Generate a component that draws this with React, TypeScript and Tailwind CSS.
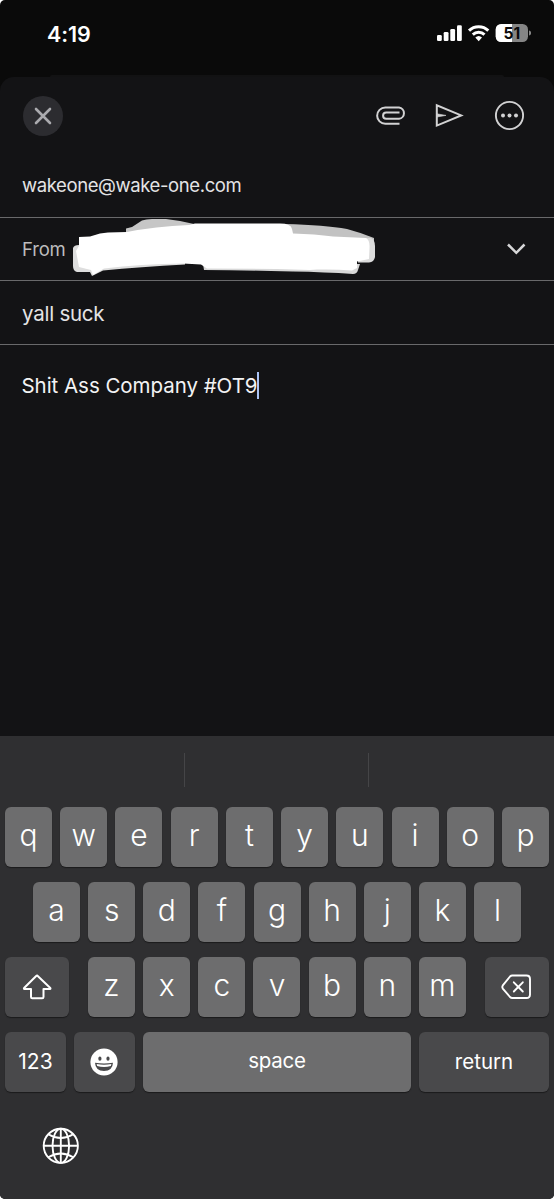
import type { ReactNode } from "react";

const topRow = ["q", "w", "e", "r", "t", "y", "u", "i", "o", "p"];
const middleRow = ["a", "s", "d", "f", "g", "h", "j", "k", "l"];
const bottomRow = ["z", "x", "c", "v", "b", "n", "m"];

const LetterKey = ({ letter }: { letter: string }) => (
  <button className="w-[47px] h-[60px] shrink-0 rounded-[6px] bg-[#6d6d6e] pb-[5px] text-[30px] leading-none font-[330] text-white shadow-[0_1px_1px_#1b1b1c] flex items-center justify-center">
    {letter}
  </button>
);

const DarkKey = ({
  className,
  label,
  children,
}: {
  className: string;
  label: string;
  children: ReactNode;
}) => (
  <button
    aria-label={label}
    className={`h-[60px] shrink-0 rounded-[6px] bg-[#49494b] text-white shadow-[0_1px_1px_#1b1b1c] flex items-center justify-center ${className}`}
  >
    {children}
  </button>
);

const StatusBar = () => (
  <div className="h-[75px] shrink-0 pl-[47px] pr-[23px] pt-[23px] flex items-start justify-between">
    <span className="pt-px text-[21.5px] leading-5 tracking-[-0.1px] font-semibold text-white">4:19</span>
    <svg width="95" height="20" viewBox="436 23 95 20" fill="none">
      <g fill="#fff">
        <rect x="437" y="35" width="4.8" height="6" rx="1.3" />
        <rect x="443.7" y="32" width="4.8" height="9" rx="1.3" />
        <rect x="450.3" y="29" width="4.8" height="12" rx="1.3" />
        <rect x="457" y="25.2" width="4.8" height="15.8" rx="1.3" />
      </g>
      <g stroke="#fff" strokeWidth="3">
        <path d="M469 30.7A14 14 0 0 1 488.3 30.7" />
        <path d="M472.8 34.6A8.6 8.6 0 0 1 484.5 34.6" />
      </g>
      <path d="M475.3 37.6Q478.7 34.6 482 37.6L478.7 41.2Z" fill="#fff" />
      <rect x="495.7" y="24" width="32.3" height="18" rx="5.5" fill="#858585" />
      <path d="M512 24H501.2A5.5 5.5 0 0 0 495.7 29.5V36.5A5.5 5.5 0 0 0 501.2 42H512Z" fill="#fff" />
      <path d="M529 30.5Q531.2 31 531.2 33T529 35.5Z" fill="#858585" />
      <text x="511.8" y="38.6" textAnchor="middle" fontSize="15.5" fontWeight="700" fill="#0a0a0a">
        51
      </text>
    </svg>
  </div>
);

const Toolbar = () => (
  <div className="h-[77px] shrink-0 pl-[23px] pr-[29px] flex items-center justify-between">
    <button
      aria-label="Close"
      className="w-10 h-10 rounded-full bg-[#2c2c30] flex items-center justify-center"
    >
      <svg width="18" height="18" viewBox="0 0 18 18" stroke="#aaaaae" strokeWidth="2.6" strokeLinecap="round">
        <path d="M2 2L16 16M16 2L2 16" />
      </svg>
    </button>
    <div className="flex items-center text-[#d2d2d3]">
      <svg width="30" height="20" viewBox="375 105.5 30 20" fill="none" stroke="currentColor" strokeWidth="2">
        <path d="M399.5 123.3H385.3A8.1 8.1 0 0 1 385.3 107H399A5.7 5.7 0 0 1 399 118.3H386.2A3.1 3.1 0 0 1 386.2 112.1H399.5" />
      </svg>
      <svg className="ml-[30px]" width="29" height="26" viewBox="435.5 103 29 26" fill="none" stroke="currentColor" strokeWidth="2">
        <path d="M437.3 105.3V125.6L461.7 115.4Z" />
        <path d="M437.3 113.8L446.5 115.4L437.3 117Z" fill="currentColor" strokeWidth="0.6" />
      </svg>
      <svg className="ml-[30px]" width="31" height="31" viewBox="0 0 31 31" fill="none">
        <circle cx="15.5" cy="15.5" r="13.6" stroke="currentColor" strokeWidth="1.9" />
        <g fill="currentColor">
          <circle cx="9" cy="15.5" r="2" />
          <circle cx="15.5" cy="15.5" r="2" />
          <circle cx="22" cy="15.5" r="2" />
        </g>
      </svg>
    </div>
  </div>
);

// White brush strokes over the sender address
const Scribble = () => (
  <svg className="ml-[5px] shrink-0" width="309" height="62" viewBox="70 218 309 62">
    <defs>
      <filter id="soft" x="-5%" y="-10%" width="110%" height="120%">
        <feGaussianBlur stdDeviation="0.7" />
      </filter>
    </defs>
    <g filter="url(#soft)">
      <path d="M126 233V228.5L132 227L142 220.5Q146 219 152 219H166Q180 220.5 194 224V234Z" fill="#c6c6c6" />
      <path d="M285 224Q325 225 347 229Q362 233 374 238V244H285Z" fill="#c2c2c2" />
      <path d="M73 248Q74 245 79 245L86 264L130 262L185 260V264.5Q140 267 103 270.5L92 276L90 272H77Q73 271 73 266Z" fill="#dedede" />
      <path d="M203 264H360L358 270Q357 274 353 274Q325 272 293 271.5Q240 270 204 270Z" fill="#d8d8d8" />
      <path d="M360 238H371Q375 240 375 246V257Q374 262 369 262.5H358Z" fill="#dcdcdc" />
      <path
        d="M79 237L90 236.5L100 233.5L108 232.5L127 232Q155 226.5 189 225L195 223.5H280Q291 223.5 292 229L293 233.5Q315 234 333 236.5L366 238Q370 240 369.5 248L369 259L357 261.5V268L352 270.5Q335 269 317 269.5L310 270L277 269L207 268.5L201 264.5L183 263.5Q140 264 104 268.5L93 275L91 270L79 267L76 251L79 246Z"
        fill="#fff"
      />
    </g>
  </svg>
);

const Keyboard = () => (
  <div className="h-[463px] shrink-0 bg-[#2f2f31] flex flex-col">
    <div className="h-[71px] shrink-0 flex items-center">
      <div className="w-[184.5px] h-[34px] mt-[-3px] border-r border-[#454547]" />
      <div className="w-[184.5px] h-[34px] mt-[-3px] border-r border-[#454547]" />
    </div>
    <div className="px-[5px] flex flex-col gap-[15px]">
      <div className="flex justify-between">
        {topRow.map((letter) => (
          <LetterKey key={letter} letter={letter} />
        ))}
      </div>
      <div className="px-[28px] flex justify-between">
        {middleRow.map((letter) => (
          <LetterKey key={letter} letter={letter} />
        ))}
      </div>
      <div className="flex justify-between">
        <DarkKey className="w-16" label="Shift">
          <svg width="30" height="26" viewBox="0 0 30 26" fill="none" stroke="currentColor" strokeWidth="2" strokeLinejoin="round">
            <path d="M15.2 1.5L28.3 14Q28.8 14.9 28 14.9H21.5V23Q21.5 24.3 20.2 24.3H10.3Q9 24.3 9 23V14.9H2.4Q1.6 14.9 2.1 14L14.2 2Q15 1 15.8 2" />
          </svg>
        </DarkKey>
        <div className="w-[378px] flex justify-between">
          {bottomRow.map((letter) => (
            <LetterKey key={letter} letter={letter} />
          ))}
        </div>
        <DarkKey className="w-16" label="Delete">
          <svg className="mr-[3px]" width="30" height="26" viewBox="0 0 30 26" fill="none" stroke="currentColor" strokeWidth="1.9" strokeLinecap="round" strokeLinejoin="round">
            <path d="M11.2 1.5H25.5Q29 1.5 29 5V20.5Q29 24 25.5 24H11.2Q10 24 9 23L1.8 14.6Q.8 13 1.8 11.4L9 2.5Q10 1.5 11.2 1.5Z" />
            <path d="M12.8 8.3L21.8 17.5M21.8 8.3L12.8 17.5" />
          </svg>
        </DarkKey>
      </div>
      <div className="flex justify-between text-[21px]">
        <DarkKey className="w-[61px]" label="Numbers">
          123
        </DarkKey>
        <DarkKey className="w-[61px]" label="Emoji">
          <svg className="mr-px" width="28" height="28" viewBox="0 0 28 28">
            <circle cx="14" cy="14" r="13.6" fill="#fff" />
            <ellipse cx="9.9" cy="10.7" rx="1.6" ry="2.1" fill="#49494b" />
            <ellipse cx="18" cy="10.7" rx="1.6" ry="2.1" fill="#49494b" />
            <path d="M5 14.8Q14 16.2 23 14.8Q22.6 23 14 23Q5.4 23 5 14.8Z" fill="#49494b" />
            <path d="M6.6 16.1Q14 17.3 21.4 16.1L20.8 18Q14 20 7.2 18Z" fill="#fff" />
          </svg>
        </DarkKey>
        <button className="w-[268px] h-[60px] rounded-[6px] bg-[#6d6d6e] pb-[2px] text-[20.5px] tracking-[-0.2px] text-white shadow-[0_1px_1px_#1b1b1c]">
          space
        </button>
        <DarkKey className="w-[130px] text-[20.5px]" label="Return">
          return
        </DarkKey>
      </div>
    </div>
    <div className="flex-1 pl-[42px] pt-[35px]">
      <svg width="38" height="38" viewBox="0 0 38 38" fill="none" stroke="#fff" strokeWidth="1.9">
        <circle cx="18.8" cy="18.8" r="17.1" />
        <ellipse cx="18.8" cy="18.8" rx="8.3" ry="17.1" />
        <path d="M18.8 1.7V35.9M1.7 18.8H35.9" />
        <path d="M6.3 7.3Q18.8 14.8 31.3 7.3M6.3 30.3Q18.8 22.8 31.3 30.3" />
      </svg>
    </div>
  </div>
);

const App = () => {
  return (
    <div className="bg-white">
      <main className="w-[554px] h-[1199px] overflow-hidden rounded-[5px] bg-[#0a0a0a] font-['Inter','Liberation_Sans',sans-serif] flex flex-col">
        <StatusBar />
        {/* Edge of the card stacked behind the sheet */}
        <div className="mx-[50px] h-[2px] shrink-0 rounded-t-full bg-[#121213]" />
        <section className="flex-1 rounded-t-[14px] bg-[#131315] flex flex-col text-[#e4e4e5]">
          <Toolbar />
          <div className="h-16 shrink-0 px-[22px] flex items-center border-b border-[#69696b] text-[18.5px] tracking-[-0.4px]">
            <span>wakeone@wake-one.com</span>
          </div>
          <div className="h-[63px] shrink-0 pl-[22px] pr-[28px] flex items-center border-b border-[#69696b]">
            <span className="w-[43px] pt-[2px] text-[18.5px] tracking-[-0.2px] text-[#bdbdbe]">From</span>
            <Scribble />
            <svg className="ml-auto" width="20" height="14" viewBox="0 0 20 14" fill="none" stroke="#d6d6d7" strokeWidth="2.5">
              <path d="M2 2.5L10.3 10.8L18.5 2.5" />
            </svg>
          </div>
          <div className="h-16 shrink-0 px-[22px] flex items-center border-b border-[#69696b] text-[20.5px] tracking-[-0.25px]">
            <span className="pt-[3px]">yall suck</span>
          </div>
          <div className="flex items-center pl-[21.5px] pt-[26px] text-[20.5px] tracking-[-0.04px] text-[#f3f3f4]">
            <span className="-mr-px">Shit Ass Company #OT9</span>
            <span className="w-[2px] h-[27px] -mt-[2px] bg-[#abc3f5]" />
          </div>
        </section>
        <Keyboard />
      </main>
    </div>
  );
};

export default App;
